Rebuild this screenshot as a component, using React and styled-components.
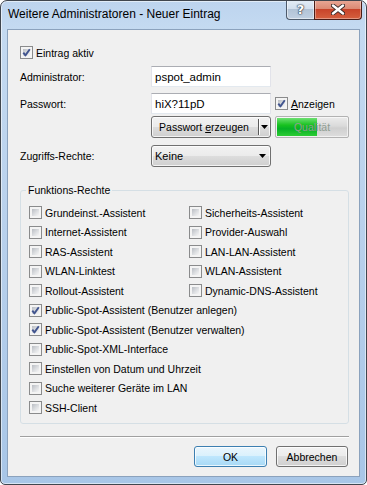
import React from 'react';
import styled, { createGlobalStyle } from 'styled-components';

const Global = createGlobalStyle`
  html, body { margin: 0; padding: 0; background: #ffffff; }
  body { font-family: "Liberation Sans", Arial, sans-serif; }
  * { box-sizing: border-box; }
`;

const Window = styled.div`
  width: 367px;
  height: 485px;
  border: 1px solid #40464e;
  border-radius: 7px 7px 5px 5px;
  background: linear-gradient(180deg, #bdd4ee 0px, #c4daf1 28px, #b9d1ec 220px, #a8c6e7 485px);
  box-shadow: inset 0 0 0 1px rgba(255, 255, 255, 0.55);
  display: flex;
  flex-direction: column;
  overflow: hidden;
`;

const TitleBar = styled.div`
  height: 28px;
  flex: none;
  display: flex;
  align-items: flex-start;
  padding: 0 4px 0 7px;
`;

const Title = styled.div`
  padding-top: 6px;
  font-size: 12px;
  line-height: 15px;
  color: #000;
  white-space: nowrap;
`;

const CaptionButtons = styled.div`
  margin-left: auto;
  display: flex;
  margin-top: -1px;
`;

const HelpButton = styled.div`
  width: 28px;
  height: 20px;
  border: 1px solid #4d5a6b;
  border-top: none;
  border-right: none;
  border-radius: 0 0 0 4px;
  background: linear-gradient(180deg, #e4edf6 0%, #d3e0ee 45%, #b2c3d6 50%, #c0d0e2 100%);
  box-shadow: inset 0 0 0 1px rgba(255, 255, 255, 0.5);
  display: flex;
  align-items: center;
  justify-content: center;
  font-family: "DejaVu Sans", sans-serif;
  font-weight: bold;
  font-size: 13px;
  color: #fff;
  text-shadow: 0 0 1px #2c3643, 0 0 1px #2c3643, 0 0 2px #2c3643;
`;

const CloseButton = styled.div`
  width: 48px;
  height: 20px;
  border: 1px solid #4a1c16;
  border-top: none;
  border-radius: 0 0 4px 0;
  background: linear-gradient(180deg, #e9a997 0%, #dc8a74 45%, #c8442a 50%, #d5603f 100%);
  box-shadow: inset 0 0 0 1px rgba(255, 255, 255, 0.35);
  display: flex;
  align-items: center;
  justify-content: center;
`;

const Client = styled.div`
  flex: 1;
  margin: 0 6px 7px 6px;
  background: #f0f0f0;
  border: 1px solid #8ba2bd;
  display: flex;
  flex-direction: column;
  padding: 16px 10px 0 12px;
  font-size: 10.5px;
  color: #000;
`;

const FormRow = styled.div`
  display: flex;
  align-items: center;
  margin-top: ${(p) => p.$mt || 0}px;
  height: ${(p) => p.$h || 21}px;
`;

const Label = styled.div`
  width: 131px;
  flex: none;
`;

const TextInput = styled.div`
  width: 120px;
  height: 21px;
  background: #fff;
  border: 1px solid #e2e3ea;
  border-top-color: #abadb3;
  border-bottom-color: #e3e9ef;
  padding: 0 3px;
  display: flex;
  align-items: center;
  font-size: 11.5px;
`;

const CheckLabel = styled.label`
  display: flex;
  align-items: center;
  gap: 3px;
  white-space: nowrap;
  margin-left: ${(p) => p.$ml || 0}px;
`;

const Box = styled.span`
  position: relative;
  width: 13px;
  height: 13px;
  flex: none;
  border: 1px solid #8a8b8c;
  background: #f4f4f4;
  &::after {
    content: '';
    position: absolute;
    inset: 1px;
    background: linear-gradient(135deg, #b9bdc3 0%, #dddfe2 55%, #f6f6f6 100%);
    border: 1px solid #f4f4f4;
  }
  svg {
    position: absolute;
    left: 0;
    top: 0;
    z-index: 1;
  }
`;

const Under = styled.span`
  text-decoration: underline;
`;

function Check({ checked, children, ml }) {
  return (
    <CheckLabel $ml={ml}>
      <Box>
        {checked && (
          <svg width="11" height="11" viewBox="0 0 11 11">
            <path d="M2.3 5.6 L4.4 8.4 L8.8 2.2" fill="none" stroke="#42558f" strokeWidth="1.9" strokeLinejoin="round" />
          </svg>
        )}
      </Box>
      <span>{children}</span>
    </CheckLabel>
  );
}

const WinButton = styled.div`
  height: ${(p) => p.$h || 21}px;
  width: ${(p) => p.$w}px;
  border: 1px solid ${(p) => (p.$default ? '#3c7fb1' : '#707070')};
  border-radius: 3px;
  background: ${(p) =>
    p.$default
      ? 'linear-gradient(180deg, #eaf6fd 0%, #d9f0fc 50%, #bee6fd 50%, #a7d9f5 100%)'
      : 'linear-gradient(180deg, #f2f2f2 0%, #ebebeb 50%, #dddddd 50%, #cfcfcf 100%)'};
  box-shadow: inset 0 0 0 1px rgba(255, 255, 255, 0.75);
  display: flex;
  align-items: center;
  justify-content: ${(p) => p.$justify || 'center'};
  flex: none;
`;

const SplitMain = styled.div`
  flex: 1;
  text-align: center;
  padding-right: 2px;
`;

const SplitDivider = styled.div`
  width: 1px;
  align-self: stretch;
  margin: 2px 0;
  background: #5a5a5a;
  box-shadow: 1px 0 0 #fff;
`;

const ArrowWrap = styled.div`
  width: ${(p) => p.$w || 12}px;
  display: flex;
  align-items: center;
  justify-content: center;
`;

const ComboText = styled.div`
  flex: 1;
  padding-left: 3px;
  font-size: 11px;
`;

const Arrow = () => (
  <svg width="7" height="4" viewBox="0 0 7 4">
    <path d="M0 0 H7 L3.5 4 Z" fill="#000" />
  </svg>
);

const Quality = styled.div`
  width: 74px;
  height: 22px;
  margin-left: 4px;
  border: 1px solid #b2b2b2;
  border-radius: 2px;
  background: linear-gradient(180deg, #ececec 0%, #dadada 45%, #cfcfcf 55%, #dedede 100%);
  box-shadow: inset 0 0 0 1px rgba(255, 255, 255, 0.6);
  display: grid;
  padding: 1px;
`;

const QualityFill = styled.div`
  grid-area: 1 / 1;
  justify-self: start;
  height: 100%;
  background: linear-gradient(180deg, #6de071 0%, #17c11f 40%, #06b025 60%, #2ccc34 100%);
`;

const QualityText = styled.div`
  grid-area: 1 / 1;
  display: flex;
  align-items: center;
  justify-content: center;
  color: #8f9d92;
`;

const Group = styled.fieldset`
  margin: 16px 0 0 0;
  padding: 6px 0 5.5px 8px;
  border: 1px solid #d5dfe5;
  border-radius: 3px;
  min-width: 0;
`;

const Legend = styled.legend`
  padding: 0 2px;
  margin-left: -3px;
  line-height: 14px;
`;

const CheckGrid = styled.div`
  display: grid;
  grid-template-columns: 160px 1fr;
  grid-auto-rows: 19.5px;
  align-items: center;
`;

const GridCell = styled.div`
  grid-column: ${(p) => (p.$full ? '1 / -1' : 'auto')};
  display: flex;
`;

const Separator = styled.div`
  margin-top: 12px;
  height: 1px;
  background: #a0a0a0;
  box-shadow: 0 1px 0 #ffffff;
`;

const ButtonRow = styled.div`
  margin-top: 9px;
  display: flex;
  justify-content: flex-end;
  gap: 9px;
  padding-right: 1px;
`;

const pairs = [
  ['Grundeinst.-Assistent', 'Sicherheits-Assistent'],
  ['Internet-Assistent', 'Provider-Auswahl'],
  ['RAS-Assistent', 'LAN-LAN-Assistent'],
  ['WLAN-Linktest', 'WLAN-Assistent'],
  ['Rollout-Assistent', 'Dynamic-DNS-Assistent'],
];

const singles = [
  ['Public-Spot-Assistent (Benutzer anlegen)', true],
  ['Public-Spot-Assistent (Benutzer verwalten)', true],
  ['Public-Spot-XML-Interface', false],
  ['Einstellen von Datum und Uhrzeit', false],
  ['Suche weiterer Geräte im LAN', false],
  ['SSH-Client', false],
];

export default function App() {
  const quality = 57;
  return (
    <>
      <Global />
      <Window>
        <TitleBar>
          <Title>Weitere Administratoren - Neuer Eintrag</Title>
          <CaptionButtons>
            <HelpButton>?</HelpButton>
            <CloseButton>
              <svg width="14" height="11" viewBox="0 0 14 11">
                <path d="M2 1.5 L12 9.5 M12 1.5 L2 9.5" stroke="#3b2a28" strokeWidth="4.2" strokeLinecap="round" />
                <path d="M2 1.5 L12 9.5 M12 1.5 L2 9.5" stroke="#ffffff" strokeWidth="2.4" strokeLinecap="round" />
              </svg>
            </CloseButton>
          </CaptionButtons>
        </TitleBar>
        <Client>
          <FormRow $h={13}>
            <Check checked>Eintrag aktiv</Check>
          </FormRow>
          <FormRow $mt={7}>
            <Label>Administrator:</Label>
            <TextInput>pspot_admin</TextInput>
          </FormRow>
          <FormRow $mt={6}>
            <Label>Passwort:</Label>
            <TextInput>hiX?11pD</TextInput>
            <Check checked ml={4}>
              <Under>A</Under>nzeigen
            </Check>
          </FormRow>
          <FormRow $mt={2} $h={22}>
            <Label />
            <WinButton $w={120} $h={22}>
              <SplitMain>
                Passwort <Under>e</Under>rzeugen
              </SplitMain>
              <SplitDivider />
              <ArrowWrap $w={11}>
                <Arrow />
              </ArrowWrap>
            </WinButton>
            <Quality>
              <QualityFill style={{ width: `${quality}%` }} />
              <QualityText>Qualität</QualityText>
            </Quality>
          </FormRow>
          <FormRow $mt={7} $h={22}>
            <Label>Zugriffs-Rechte:</Label>
            <WinButton $w={120} $h={22} $justify="flex-start">
              <ComboText>Keine</ComboText>
              <ArrowWrap $w={16}>
                <Arrow />
              </ArrowWrap>
            </WinButton>
          </FormRow>
          <Group>
            <Legend>Funktions-Rechte</Legend>
            <CheckGrid>
              {pairs.flatMap(([a, b]) => [
                <GridCell key={a}>
                  <Check>{a}</Check>
                </GridCell>,
                <GridCell key={b}>
                  <Check>{b}</Check>
                </GridCell>,
              ])}
              {singles.map(([t, c]) => (
                <GridCell key={t} $full>
                  <Check checked={c}>{t}</Check>
                </GridCell>
              ))}
            </CheckGrid>
          </Group>
          <Separator />
          <ButtonRow>
            <WinButton $w={73} $default>
              OK
            </WinButton>
            <WinButton $w={72}>Abbrechen</WinButton>
          </ButtonRow>
        </Client>
      </Window>
    </>
  );
}
